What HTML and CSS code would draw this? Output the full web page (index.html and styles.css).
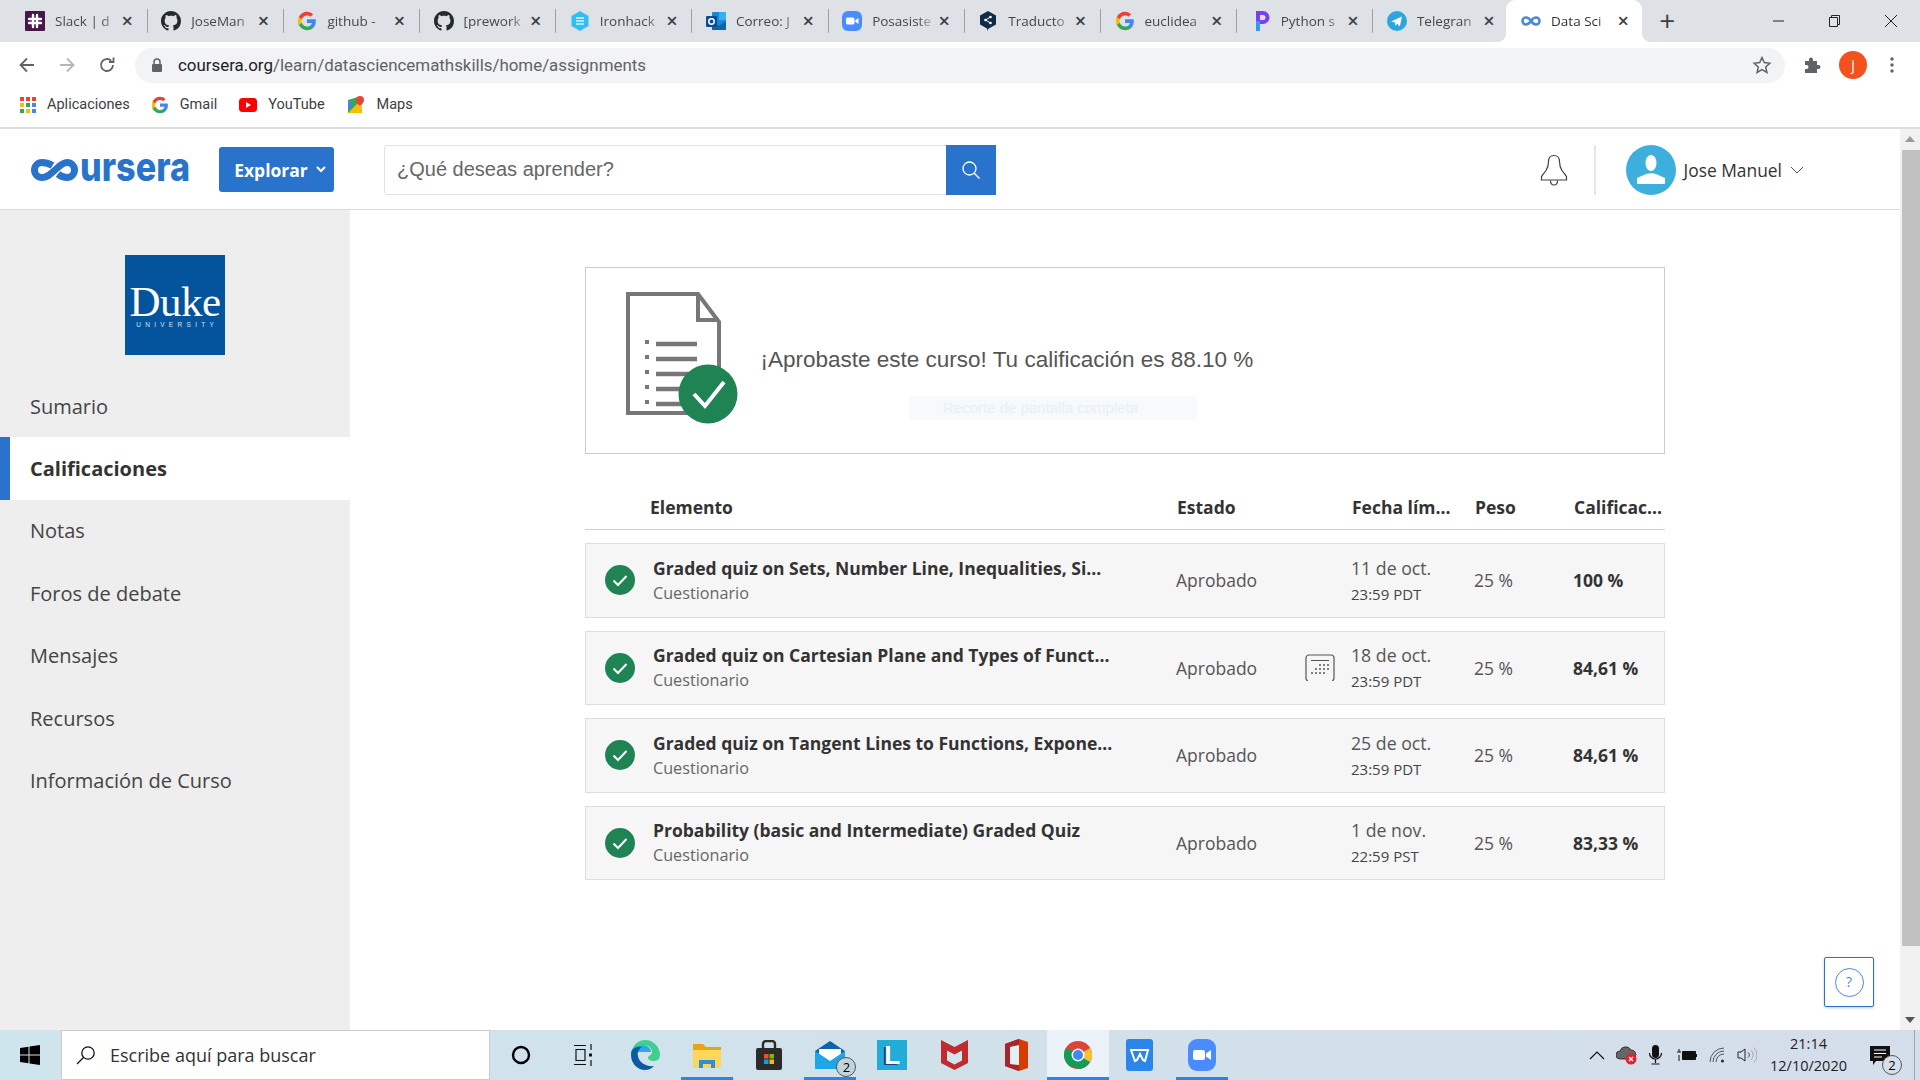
FILE: index.html
```html
<!DOCTYPE html>
<html lang="es">
<head>
<meta charset="utf-8">
<title>Data Science Math Skills - Coursera</title>
<link rel="stylesheet" href="styles.css">
</head>
<body>
<svg class="defs" aria-hidden="true">
  <symbol id="g" viewBox="0 0 24 24">
    <path fill="#4285F4" d="M22.56 12.25c0-.78-.07-1.53-.2-2.25H12v4.26h5.92c-.26 1.37-1.04 2.53-2.21 3.31v2.77h3.57c2.08-1.92 3.28-4.74 3.28-8.09z"/>
    <path fill="#34A853" d="M12 23c2.97 0 5.46-.98 7.28-2.66l-3.57-2.77c-.98.66-2.23 1.06-3.71 1.06-2.86 0-5.29-1.93-6.16-4.53H2.18v2.84C3.99 20.53 7.7 23 12 23z"/>
    <path fill="#FBBC05" d="M5.84 14.09c-.22-.66-.35-1.36-.35-2.09s.13-1.43.35-2.09V7.07H2.18C1.43 8.55 1 10.22 1 12s.43 3.45 1.18 4.93l2.85-2.22.81-.62z"/>
    <path fill="#EA4335" d="M12 5.38c1.62 0 3.06.56 4.21 1.64l3.15-3.15C17.45 2.09 14.97 1 12 1 7.7 1 3.99 3.47 2.18 7.07l3.66 2.84c.87-2.6 3.3-4.53 6.16-4.53z"/>
  </symbol>
  <symbol id="gh" viewBox="0 0 16 16">
    <path fill="#24292e" d="M8 0C3.58 0 0 3.58 0 8c0 3.54 2.29 6.53 5.47 7.59.4.07.55-.17.55-.38 0-.19-.01-.82-.01-1.49-2.01.37-2.53-.49-2.69-.94-.09-.23-.48-.94-.82-1.13-.28-.15-.68-.52-.01-.53.63-.01 1.08.58 1.23.82.72 1.21 1.87.87 2.33.66.07-.52.28-.87.51-1.07-1.78-.2-3.64-.89-3.64-3.95 0-.87.31-1.59.82-2.15-.08-.2-.36-1.02.08-2.12 0 0 .67-.21 2.2.82.64-.18 1.32-.27 2-.27.68 0 1.36.09 2 .27 1.53-1.04 2.2-.82 2.2-.82.44 1.1.16 1.92.08 2.12.51.56.82 1.27.82 2.15 0 3.07-1.87 3.75-3.65 3.95.29.25.54.73.54 1.48 0 1.07-.01 1.93-.01 2.2 0 .21.15.46.55.38A8.013 8.013 0 0016 8c0-4.42-3.58-8-8-8z"/>
  </symbol>
  <symbol id="slack" viewBox="0 0 20 20">
    <rect width="20" height="20" rx="1" fill="#4a154b"/>
    <path d="M8 4v12M12 4v12M4 8h12M4 12h12" stroke="#fff" stroke-width="2.4" stroke-linecap="round"/>
  </symbol>
  <symbol id="iron" viewBox="0 0 20 20">
    <path d="M10 0l8.5 5v10L10 20l-8.500-5V5z" fill="#35bdf0"/>
    <path d="M6 7h8M6 10h8M6 13h8" stroke="#d9f3fd" stroke-width="1.300"/>
  </symbol>
  <symbol id="outlook" viewBox="0 0 20 20">
    <rect x="6" y="1" width="14" height="16" rx="1" fill="#1a86d8"/>
    <rect x="13" y="1" width="7" height="8" fill="#38b0ee"/>
    <path d="M6 10l7 5 7-5v9H6z" fill="#0f62ac"/>
    <rect y="5" width="11" height="11" rx="1" fill="#0a4d94"/>
    <circle cx="5.500" cy="10.500" r="2.700" fill="none" stroke="#fff" stroke-width="1.500"/>
  </symbol>
  <symbol id="zoom" viewBox="0 0 20 20">
    <rect width="20" height="20" rx="6" fill="#4a8cff"/>
    <rect x="4" y="6.500" width="8.500" height="7" rx="1.500" fill="#fff"/>
    <path d="M13.300 9.300L16.500 7v6l-3.200-2.300z" fill="#fff"/>
  </symbol>
  <symbol id="deepl" viewBox="0 0 20 20">
    <path d="M10 0l8 4.500v9L10 18l-1 2v-2.500l-7-4v-9z" fill="#0f2b46"/>
    <circle cx="7.500" cy="9" r="1.300" fill="#fff"/>
    <circle cx="12.500" cy="6" r="1.300" fill="#fff"/>
    <circle cx="12.500" cy="12" r="1.300" fill="#fff"/>
    <path d="M7.500 9l5-3M7.500 9l5 3" stroke="#fff"/>
  </symbol>
  <symbol id="pcharm" viewBox="0 0 20 20">
    <path d="M5 0h7a6.500 6.500 0 010 13H9v-4h3a2.500 2.500 0 000-5H5z" fill="#7b3ff2"/>
    <rect x="5" y="4" width="4" height="16" fill="#2a9df4"/>
    <rect x="5" y="4" width="4" height="6" fill="#7b3ff2"/>
  </symbol>
  <symbol id="tg" viewBox="0 0 20 20">
    <circle cx="10" cy="10" r="10" fill="#2ca5e0"/>
    <path d="M4 10.500L15 5.500 12.800 15.500 10 12.800 8.500 15 8 11.500z" fill="#fff"/>
  </symbol>
  <symbol id="inf" viewBox="0 0 20 10">
    <path d="M10 5C8.500 2.700 7.200 1.500 5 1.500a3.500 3.500 0 000 7c2.200 0 3.500-1.200 5-3.500s2.800-3.500 5-3.500a3.500 3.500 0 010 7c-2.200 0-3.500-1.200-5-3.500z" fill="none" stroke="#4d8ad0" stroke-width="2.600"/>
  </symbol>
  <symbol id="ok" viewBox="0 0 30 30">
    <circle cx="15" cy="15" r="15" fill="#1f8354"/>
    <path d="M8.500 15.500l4.500 4.500 8.500-9" fill="none" stroke="#fff" stroke-width="2"/>
  </symbol>
</svg>

<div class="tabs">
  <div class="tab"><svg class="fav"><use href="#slack"/></svg><span class="tab-t">Slack | d</span><span class="tab-x">×</span></div>
  <div class="tab"><svg class="fav"><use href="#gh"/></svg><span class="tab-t">JoseMan</span><span class="tab-x">×</span></div>
  <div class="tab"><svg class="fav"><use href="#g"/></svg><span class="tab-t">github -</span><span class="tab-x">×</span></div>
  <div class="tab"><svg class="fav"><use href="#gh"/></svg><span class="tab-t">[prework</span><span class="tab-x">×</span></div>
  <div class="tab"><svg class="fav"><use href="#iron"/></svg><span class="tab-t">Ironhack</span><span class="tab-x">×</span></div>
  <div class="tab"><svg class="fav"><use href="#outlook"/></svg><span class="tab-t">Correo: J</span><span class="tab-x">×</span></div>
  <div class="tab"><svg class="fav"><use href="#zoom"/></svg><span class="tab-t">Posasiste</span><span class="tab-x">×</span></div>
  <div class="tab"><svg class="fav"><use href="#deepl"/></svg><span class="tab-t">Traducto</span><span class="tab-x">×</span></div>
  <div class="tab"><svg class="fav"><use href="#g"/></svg><span class="tab-t">euclidea</span><span class="tab-x">×</span></div>
  <div class="tab"><svg class="fav"><use href="#pcharm"/></svg><span class="tab-t">Python s</span><span class="tab-x">×</span></div>
  <div class="tab"><svg class="fav"><use href="#tg"/></svg><span class="tab-t">Telegran</span><span class="tab-x">×</span></div>
  <div class="tab tab-on"><svg class="fav"><use href="#inf"/></svg><span class="tab-t">Data Sci</span><span class="tab-x">×</span></div>
  <div class="newtab">+</div>
  <div class="winctl">
    <svg width="14" height="14" viewBox="0 0 14 14"><path d="M1 7h11" stroke="#222"/></svg>
    <svg width="14" height="14" viewBox="0 0 14 14"><path d="M1.500 3.500h8v9h-8zM3.500 3.500v-2h8v9h-2" fill="none" stroke="#222"/></svg>
    <svg width="14" height="14" viewBox="0 0 14 14"><path d="M1 1l12 12M13 1L1 13" stroke="#222"/></svg>
  </div>
</div>

<div class="toolbar">
  <div class="nav">
    <svg width="18" height="18" viewBox="0 0 18 18"><path d="M16 9H3M9 2.500L2.500 9 9 15.500" fill="none" stroke="#5f6368" stroke-width="1.800"/></svg>
    <svg width="18" height="18" viewBox="0 0 18 18"><path d="M2 9h13M9 2.500L15.500 9 9 15.500" fill="none" stroke="#b4b6b9" stroke-width="1.800"/></svg>
    <svg width="18" height="18" viewBox="0 0 18 18"><path d="M15 9a6 6 0 11-1.800-4.300M15.500 1.500v4.500H11" fill="none" stroke="#5f6368" stroke-width="1.800"/></svg>
  </div>
  <div class="omni">
    <svg class="lock" width="12" height="14" viewBox="0 0 12 14"><path d="M3 6V4a3 3 0 016 0v2" fill="none" stroke="#5f6368" stroke-width="1.500"/><rect x="1" y="6" width="10" height="8" rx="1" fill="#5f6368"/></svg>
    <span class="url"><span class="url-d">coursera.org</span>/learn/datasciencemathskills/home/assignments</span>
    <svg class="star" width="20" height="20" viewBox="0 0 20 20"><path d="M10 2.500l2.300 5.100 5.500.6-4.100 3.700 1.200 5.500-4.900-2.800-4.900 2.800 1.200-5.500L2.200 8.200l5.500-.6z" fill="none" stroke="#5f6368" stroke-width="1.500"/></svg>
  </div>
  <div class="tools">
    <svg width="20" height="20" viewBox="0 0 20 20"><path d="M3 6h4V4.500a2 2 0 014 0V6h4v4h1.500a2 2 0 010 4H15v4H3v-4h1.500a2 2 0 000-4H3z" fill="#5f6368"/></svg>
    <span class="me">j</span>
    <svg width="6" height="18" viewBox="0 0 6 18"><circle cx="3" cy="3" r="1.700" fill="#5f6368"/><circle cx="3" cy="9" r="1.700" fill="#5f6368"/><circle cx="3" cy="15" r="1.700" fill="#5f6368"/></svg>
  </div>
</div>

<div class="bookmarks">
  <div class="bm"><svg width="16" height="16" viewBox="0 0 16 16">
    <path d="M0 0h4v4H0z" fill="#ea4335"/><path d="M6 0h4v4H6z" fill="#ea4335"/><path d="M12 0h4v4h-4z" fill="#ea4335"/>
    <path d="M0 6h4v4H0z" fill="#fbbc05"/><path d="M6 6h4v4H6z" fill="#34a853"/><path d="M12 6h4v4h-4z" fill="#4285f4"/>
    <path d="M0 12h4v4H0z" fill="#34a853"/><path d="M6 12h4v4H6z" fill="#fbbc05"/><path d="M12 12h4v4h-4z" fill="#4285f4"/></svg>Aplicaciones</div>
  <div class="bm"><svg width="18" height="18"><use href="#g"/></svg>Gmail</div>
  <div class="bm"><svg width="18" height="14" viewBox="0 0 18 14"><rect width="18" height="14" rx="3.500" fill="#f00"/><path d="M7 4l5 3-5 3z" fill="#fff"/></svg>YouTube</div>
  <div class="bm"><svg width="18" height="18" viewBox="0 0 18 18"><path d="M1 4l10-3v16l-10 0z" fill="#34a853"/><path d="M1 17L11 7l4 4v6z" fill="#fbbc05"/><path d="M1 4l5 5-5 5z" fill="#4285f4"/><path d="M13 0a4 4 0 014 4c0 3-4 6-4 6s-4-3-4-6a4 4 0 014-4z" fill="#ea4335"/></svg>Maps</div>
</div>

<div class="page">
  <div class="viewport">
    <header class="head">
      <svg class="logo" width="168" height="22" viewBox="0 0 168 22" role="img">
        <path d="M22.500 6.500C19.500 4.700 16.500 3.500 12 3.500a7.500 7.500 0 000 15c5.500 0 8.500-3.500 13-7.500s7.500-7.500 12-7.500a7.500 7.500 0 010 15c-3 0-6-1-9-3.500" fill="none" stroke="#2a73cc" stroke-width="7"/>
        <text x="50" y="21.500" class="logo-t" textLength="110" lengthAdjust="spacingAndGlyphs">ursera</text>
      </svg>
      <button class="explore">Explorar<svg width="10" height="7" viewBox="0 0 10 7"><path d="M1 1l4 4 4-4" fill="none" stroke="#fff" stroke-width="2"/></svg></button>
      <div class="search">
        <span class="search-t">¿Qué deseas aprender?</span>
        <span class="search-b"><svg width="20" height="20" viewBox="0 0 20 20"><circle cx="8.500" cy="8.500" r="6.500" fill="none" stroke="#fff" stroke-width="1.300"/><path d="M13.200 13.200L18.500 18.500" stroke="#fff" stroke-width="1.300"/></svg></span>
      </div>
      <div class="user">
        <svg width="30" height="32" viewBox="0 0 30 32"><path d="M15 1.500c-3.500 0-5.500 2.500-5.500 6 0 3-.5 6-2.500 9-1.500 2.300-3.500 4.500-4.500 6v3.500h25V22.500c-1-1.500-3-3.700-4.500-6-2-3-2.500-6-2.500-9 0-3.500-2-6-5.500-6z" fill="#fff" stroke="#3c4043" stroke-width="1.200"/><path d="M11.500 26.500c0 6 7 6 7 0" fill="none" stroke="#3c4043" stroke-width="1.200"/></svg>
        <span class="vr"></span>
        <svg width="50" height="50" viewBox="0 0 50 50"><circle cx="25" cy="25" r="25" fill="#3cafdc"/><ellipse cx="25" cy="18" rx="5.500" ry="8" fill="#fff"/><path d="M11 39v-6l9-4c3-1 7-1 10 0l9 4v6z" fill="#fff"/></svg>
        <span class="uname">Jose Manuel</span>
        <svg width="14" height="8" viewBox="0 0 14 8"><path d="M1 1l6 6 6-6" fill="none" stroke="#555"/></svg>
      </div>
    </header>
    <div class="content">
      <nav class="side">
        <div class="duke"><span class="duke-n">Duke</span><span class="duke-u">UNIVERSITY</span></div>
        <ul class="menu">
          <li>Sumario</li>
          <li class="on">Calificaciones</li>
          <li>Notas</li>
          <li>Foros de debate</li>
          <li>Mensajes</li>
          <li>Recursos</li>
          <li>Información de Curso</li>
        </ul>
      </nav>
      <main class="main">
        <section class="banner">
          <svg width="112" height="133" viewBox="0 0 112 133">
            <path d="M2 2h70l21 28v91H2z" fill="#fff" stroke="#777" stroke-width="4"/>
            <path d="M72 2v26h21" fill="none" stroke="#777" stroke-width="4"/>
            <path d="M30 52h41M30 67h41M30 82h41M30 97h41M30 112h41" stroke="#777" stroke-width="4.500"/>
            <path d="M19 50h4M19 65h4M19 80h4M19 95h4M19 110h4" stroke="#777" stroke-width="4"/>
            <circle cx="82" cy="102" r="29.500" fill="#1f8354"/>
            <path d="M68 102l11 12 19-24" fill="none" stroke="#fff" stroke-width="4"/>
          </svg>
          <p class="pass">¡Aprobaste este curso! Tu calificación es 88.10 %</p>
          <div class="ghost">Recorte de pantalla completa</div>
        </section>
        <div class="thead">
          <span>Elemento</span><span>Estado</span><span>Fecha lím...</span><span>Peso</span><span>Calificac...</span>
        </div>
        <div class="rows">
          <div class="row">
            <svg class="ok"><use href="#ok"/></svg>
            <div><div class="ti">Graded quiz on Sets, Number Line, Inequalities, Si...</div><div class="su">Cuestionario</div></div>
            <span class="st">Aprobado</span><span></span>
            <div><div class="da">11 de oct.</div><div class="tm">23:59 PDT</div></div>
            <span class="st">25 %</span><b class="gr">100 %</b>
          </div>
          <div class="row">
            <svg class="ok"><use href="#ok"/></svg>
            <div><div class="ti">Graded quiz on Cartesian Plane and Types of Funct...</div><div class="su">Cuestionario</div></div>
            <span class="st">Aprobado</span>
            <svg class="cal" width="30" height="28" viewBox="0 0 30 28"><path d="M1 24V4a3 3 0 013-3h22a3 3 0 013 3v20M1 24c0 1.500 1 2.500 2 2.500M29 24c0 1.500-1 2.500-2 2.500M6 6.500h18" fill="none" stroke="#555" stroke-width="1.200"/><path d="M14 11h2M18 11h2M22 11h2M10 15h2M14 15h2M18 15h2M22 15h2M6 19h2M10 19h2M14 19h2M18 19h2" stroke="#555" stroke-width="1.600"/></svg>
            <div><div class="da">18 de oct.</div><div class="tm">23:59 PDT</div></div>
            <span class="st">25 %</span><b class="gr">84,61 %</b>
          </div>
          <div class="row">
            <svg class="ok"><use href="#ok"/></svg>
            <div><div class="ti">Graded quiz on Tangent Lines to Functions, Expone...</div><div class="su">Cuestionario</div></div>
            <span class="st">Aprobado</span><span></span>
            <div><div class="da">25 de oct.</div><div class="tm">23:59 PDT</div></div>
            <span class="st">25 %</span><b class="gr">84,61 %</b>
          </div>
          <div class="row">
            <svg class="ok"><use href="#ok"/></svg>
            <div><div class="ti">Probability (basic and Intermediate) Graded Quiz</div><div class="su">Cuestionario</div></div>
            <span class="st">Aprobado</span><span></span>
            <div><div class="da">1 de nov.</div><div class="tm">22:59 PST</div></div>
            <span class="st">25 %</span><b class="gr">83,33 %</b>
          </div>
        </div>
      </main>
    </div>
    <div class="help"><span class="help-c">?</span></div>
  </div>
  <div class="scroll">
    <span class="arr-up"></span>
    <span class="thumb"></span>
    <span class="arr-dn"></span>
  </div>
</div>

<footer class="taskbar">
  <div class="start"><svg width="20" height="20" viewBox="0 0 20 20"><path d="M0 3l8.500-1.200v7.700H0zM9.500 1.600L20 0v9.500H9.500zM0 10.500h8.500v7.700L0 17zM9.500 10.500H20V20L9.500 18.400z" fill="#000"/></svg></div>
  <div class="tsearch">
    <svg width="20" height="20" viewBox="0 0 20 20"><circle cx="12" cy="8" r="6.200" fill="none" stroke="#111" stroke-width="1.300"/><path d="M7.500 12.500L1 19" stroke="#111" stroke-width="1.300"/></svg>
    <span>Escribe aquí para buscar</span>
  </div>
  <div class="slots">
    <div class="slot"><svg width="20" height="20" viewBox="0 0 20 20"><circle cx="10" cy="10" r="8" fill="none" stroke="#000" stroke-width="2.400"/></svg></div>
    <div class="slot"><svg width="20" height="24" viewBox="0 0 20 24"><path d="M1 2.500h12M1 21.500h12M3 6.500h9v11H3zM18 1v6M18 17v6" fill="none" stroke="#111" stroke-width="1.200"/><rect x="16" y="10.500" width="3" height="3" fill="#111"/></svg></div>
    <div class="slot"><svg width="30" height="30" viewBox="0 0 30 30"><path d="M15 0a15 15 0 0115 15c0 2-1 6-6 6-3 0-6-1-6-3 0-3 4-2 4-6 0-4-4-7-8-7-6 0-11 4-13 8C3 5 8 0 15 0z" fill="#3fcf8e"/><path d="M1 13c0-4 6-8 12-8 4 0 8 3 8 7H7c-3 0-6 3-6 1z" fill="#29abe2"/><path d="M1 15C1 8 7 6 12 7c-3 2-5 5-4 9 1 7 9 11 16 10-3 3-6 4-9 4C7 30 1 23 1 15z" fill="#0c59a4"/></svg></div>
    <div class="slot run"><svg width="28" height="26" viewBox="0 0 28 26"><path d="M0 2h10l3 3h15v21H0z" fill="#e8a317"/><path d="M0 8h28v18H0z" fill="#fbd75b"/><path d="M6 18h16v8h-4v-4h-8v4H6z" fill="#2f8fd6"/></svg></div>
    <div class="slot"><svg width="26" height="30" viewBox="0 0 26 30"><rect x="0" y="8" width="26" height="22" rx="2" fill="#2b2b2b"/><path d="M7 9V4a3 3 0 013-3h6a3 3 0 013 3v5" fill="none" stroke="#2b2b2b" stroke-width="2.400"/><rect x="8" y="14" width="4.500" height="4.500" fill="#f25022"/><rect x="13.500" y="14" width="4.500" height="4.500" fill="#7fba00"/><rect x="8" y="19.500" width="4.500" height="4.500" fill="#00a4ef"/><rect x="13.500" y="19.500" width="4.500" height="4.500" fill="#ffb900"/></svg></div>
    <div class="slot run"><svg width="30" height="28" viewBox="0 0 30 28"><path d="M0 10L15 0l15 10v18H0z" fill="#0f62ac"/><path d="M4 8h22v12L15 24 4 20z" fill="#fff"/><path d="M0 10l15 10 15-10v18H0z" fill="#1fa6e8"/></svg><span class="badge">2</span></div>
    <div class="slot"><div class="lapp"><span>L</span></div></div>
    <div class="slot"><svg width="27" height="30" viewBox="0 0 27 30"><path d="M0 0l13.500 7L27 0v23L13.500 30 0 23z" fill="#c02b30"/><path d="M6 10.500l7.500 4 7.500-4v10l-7.500 4-7.500-4z" fill="#d2e4ee"/></svg></div>
    <div class="slot"><svg width="24" height="34" viewBox="0 0 24 34"><path d="M15 1L1 6v22l14 5 9-3V4z" fill="#d83b01"/><path d="M15 1L1 6v22l14 5V27L6 26V9l9-2z" fill="#a5262d"/><path d="M6 9l9-2v20l-9-1z" fill="#e8eff4"/></svg></div>
    <div class="slot act run"><svg width="28" height="28" viewBox="0 0 28 28"><circle cx="14" cy="14" r="14" fill="#db4437"/><path d="M14 14L26.100 7a14 14 0 010 14L14 28z" fill="#fbc02d"/><path d="M14 14l-6 10.500 6 3.500A14 14 0 0026 21zM14 14L2 7A14 14 0 008 26.600z" fill="#0f9d58"/><circle cx="14" cy="14" r="6.500" fill="#fff"/><circle cx="14" cy="14" r="5" fill="#4285f4"/></svg></div>
    <div class="slot"><svg width="27" height="32" viewBox="0 0 27 32"><rect width="27" height="32" rx="3" fill="#2b85ea"/><path d="M5 11h17l-3 11-2-1-3-6-3 6-2 1z" fill="none" stroke="#fff" stroke-width="2"/></svg></div>
    <div class="slot run"><svg width="28" height="32" viewBox="0 0 28 32"><rect width="28" height="32" rx="9" fill="#4a8cff"/><rect x="5" y="11" width="12" height="10" rx="2" fill="#fff"/><path d="M18 14.500l5-3.500v10l-5-3.500z" fill="#fff"/></svg></div>
  </div>
  <div class="tray">
    <div class="ti-s"><svg width="16" height="9" viewBox="0 0 16 9"><path d="M1 8l7-7 7 7" fill="none" stroke="#111" stroke-width="1.200"/></svg></div>
    <div class="ti-s"><svg width="22" height="20" viewBox="0 0 22 20"><path d="M4 14a4 4 0 010-8 6 6 0 0111-1 4.500 4.500 0 014 7v2z" fill="#666" stroke="#222" stroke-width=".8"/><circle cx="15" cy="14" r="5.500" fill="#e5202e"/><path d="M13 12l4 4M17 12l-4 4" stroke="#fff" stroke-width="1.300"/></svg></div>
    <div class="ti-s ti-mic"><svg width="14" height="20" viewBox="0 0 14 20"><rect x="4" width="7" height="13" rx="3.500" fill="#111"/><path d="M1.500 8a6 6 0 0012 0M7.500 14v4M3.500 19h8" fill="none" stroke="#111" stroke-width="1.200"/></svg></div>
    <div class="ti-s"><svg width="20" height="12" viewBox="0 0 20 12"><path d="M0 3h4M2 0v3M2 6v6" stroke="#111"/><path d="M5.500 2.500h13v8h-13z" fill="#111" stroke="#111"/><rect x="19" y="5" width="1" height="3" fill="#111"/></svg></div>
    <div class="ti-s"><svg width="16" height="16" viewBox="0 0 16 16"><path d="M1 15A14 14 0 0115 1M4 15A11 11 0 0115 4M7 15A8 8 0 0115 7" fill="none" stroke="#555" stroke-width="1"/><circle cx="13.500" cy="14" r="1.600" fill="#333"/></svg></div>
    <div class="ti-s"><svg width="20" height="18" viewBox="0 0 20 18"><path d="M1 6h3l4-3v12l-4-3H1z" fill="none" stroke="#222"/><path d="M11 6.500a3 3 0 010 5" fill="none" stroke="#444"/><path d="M14 4a7 7 0 010 10M17 1.500a11 11 0 010 15" fill="none" stroke="#aaa"/></svg></div>
    <div class="clock"><span>21:14</span><span>12/10/2020</span></div>
    <div class="notif"><svg width="20" height="19" viewBox="0 0 20 19"><path d="M0 0h20v15H6l-3 4v-4H0z" fill="#111"/><path d="M4 4h12M4 7.500h12M4 11h8" stroke="#fff"/></svg><span class="nbadge">2</span></div>
    <span class="showdesk"></span>
  </div>
</footer>
</body>
</html>
```

FILE: styles.css
```css
* { box-sizing: border-box; }
html, body { height: 100%; }
body {
  margin: 0;
  height: 1080px;
  overflow: hidden;
  display: flex;
  flex-direction: column;
  font-family: "Open Sans", "Liberation Sans", sans-serif;
  color: #333;
  background: #fff;
}
.defs { position: absolute; width: 0; height: 0; }

/* browser tabs */
.tabs {
  height: 42px;
  flex: none;
  background: #dee1e6;
  display: flex;
  align-items: stretch;
  padding: 0 0 0 10px;
}
.tab {
  width: 136.2px;
  flex: none;
  display: flex;
  align-items: center;
  padding: 0 12px 0 15px;
  position: relative;
  font-size: 13.5px;
  color: #45474a;
}
.tab::after {
  content: "";
  position: absolute;
  right: -1.5px;
  top: 9px;
  bottom: 9px;
  width: 1px;
  background: #9a9da1;
}
.tab:nth-child(11)::after { display: none; }
.tab-on {
  background: #fff;
  border-radius: 9px 9px 0 0;
  color: #333;
  margin-left: -2px;
}
.tab-on::before, .tab-on::after {
  content: "";
  position: absolute;
  top: auto;
  bottom: 0;
  width: 8px;
  height: 8px;
  background: radial-gradient(circle at 0 0, #dee1e6 7.5px, #fff 8px);
}
.tab-on::before { left: -8px; }
.tab-on::after {
  right: -8px;
  background: radial-gradient(circle at 100% 0, #dee1e6 7.5px, #fff 8px);
}
.fav { width: 20px; height: 20px; flex: none; }
.tab-t {
  flex: 1;
  min-width: 0;
  margin-left: 10px;
  white-space: nowrap;
  -webkit-mask-image: linear-gradient(to right, #000 70%, transparent 100%);
  mask-image: linear-gradient(to right, #000 70%, transparent 100%);
}
.tab-x { width: 14px; text-align: center; font-size: 20px; line-height: 20px; font-weight: 600; color: #3c4043; flex: none; }
.newtab { width: 50px; text-align: center; font-size: 28px; line-height: 40px; color: #3c4043; flex: none; }
.winctl {
  margin-left: auto;
  display: flex;
  align-items: center;
  gap: 42px;
  padding: 0 22px 0 0;
}

/* browser toolbar */
.toolbar {
  height: 44px;
  flex: none;
  display: flex;
  align-items: center;
  padding: 2px 0 0 18px;
}
.nav { display: flex; gap: 22px; width: 117px; flex: none; }
.omni {
  width: 1650px;
  height: 35px;
  background: #f1f3f4;
  border-radius: 18px;
  display: flex;
  align-items: center;
  padding: 0 13px 0 16px;
  flex: none;
}
.url { margin-left: 15px; font-size: 16.9px; color: #5f6368; white-space: nowrap; font-family: Roboto, sans-serif; }
.url-d { color: #202124; }
.star { margin-left: auto; }
.tools { display: flex; align-items: center; padding-left: 17px; gap: 17px; }
.tools svg:last-child { margin-left: 5px; }
.me {
  width: 28px; height: 28px; border-radius: 50%;
  background: #f4511e; color: #fff;
  font-size: 14px; line-height: 28px; text-align: center;
}

/* bookmarks */
.bookmarks {
  height: 43px;
  flex: none;
  display: flex;
  align-items: center;
  padding: 0 0 4px 20px;
  gap: 21px;
  border-bottom: 2px solid #dcdcdc;
  font-size: 14.500px;
  color: #3c4043;
  font-family: Roboto, sans-serif;
}
.bm { display: flex; align-items: center; gap: 11px; }
.bm:nth-child(3) { margin-left: 1px; }
.bm:nth-child(4) { margin-left: 1px; gap: 12px; }

/* page */
.page { flex: 1; min-height: 0; display: flex; }
.viewport { flex: 1; min-width: 0; display: flex; flex-direction: column; position: relative; }
.head {
  height: 81px;
  flex: none;
  display: flex;
  align-items: center;
  padding: 1px 0 0 30px;
  border-bottom: 1px solid #dcdcdc;
}
.logo { flex: none; }
.logo-t { font-family: Inter, sans-serif; font-weight: 800; font-size: 40px; fill: #2a73cc; }
.explore {
  margin-left: 21px;
  width: 115px;
  height: 45px;
  background: #2a73cc;
  color: #fff;
  border: 0;
  border-radius: 3px;
  font: 700 17.500px "Open Sans", sans-serif;
  display: flex;
  align-items: center;
  justify-content: center;
  gap: 8px;
  padding: 0 0 0 7px;
}
.search {
  margin-left: 50px;
  width: 612px;
  height: 50px;
  border: 1.500px solid #e4e4e4;
  border-radius: 3px;
  display: flex;
  align-items: center;
}
.search-t { flex: 1; padding-left: 12px; font: 20px "Liberation Sans", sans-serif; color: #666; }
.search-b { width: 50px; height: 50px; margin: -1px; background: #2a73cc; display: flex; align-items: center; justify-content: center; }
.user { margin-left: auto; display: flex; align-items: center; padding-right: 96px; }
.vr { width: 2px; height: 50px; background: #e6e6e6; margin: 0 30px 0 25px; }
.uname { margin: 0 8px; font-size: 17.400px; color: #333; white-space: nowrap; }

.content { flex: 1; min-height: 0; display: flex; }
.side { width: 350px; flex: none; background: #eee; padding-top: 45px; }
.duke {
  width: 100px;
  height: 100px;
  margin: 0 auto 0 125px;
  background: #03549c;
  color: #fff;
  display: flex;
  flex-direction: column;
  align-items: center;
  padding-top: 28px;
  font-family: "Liberation Serif", serif;
}
.duke-n { font-size: 43px; line-height: 38px; letter-spacing: -.5px; }
.duke-u { font-size: 6.500px; line-height: 8px; letter-spacing: 4.300px; margin: 0 -4.300px 0 0; color: #d9e4f0; font-family: "Liberation Sans", sans-serif; }
.menu { list-style: none; margin: 20px 0 0; padding: 0; }
.menu li {
  height: 62.4px;
  display: flex;
  align-items: center;
  padding-left: 30px;
  font-size: 20px;
  color: #444;
}
.menu .on {
  background: #fff;
  font-weight: 700;
  color: #333;
  border-left: 10px solid #2a73cc;
  padding-left: 20px;
}
.main { flex: 1; min-width: 0; padding: 57px 0 0 235px; }
.banner {
  width: 1080px;
  height: 187px;
  border: 1px solid #ccc;
  display: flex;
  align-items: center;
  padding: 0 0 5px 40px;
  gap: 22.500px;
  position: relative;
}
.pass { margin: 4px 0 0; font: 22.500px "Liberation Sans", sans-serif; color: #555; }
.ghost {
  position: absolute;
  left: 324px;
  top: 128px;
  width: 287px;
  height: 24px;
  padding-left: 33px;
  background: #f6fafd;
  color: #e9eff5;
  font: 15px/24px "Liberation Sans", sans-serif;
}
.thead {
  width: 1080px;
  margin-top: 35px;
  border-bottom: 1.500px solid #d0d0d0;
  display: grid;
  grid-template-columns: 527px 175px 123px 99px 1fr;
  padding: 0 0 4px 65px;
  height: 41px;
  align-items: center;
  font-size: 17.500px;
  font-weight: 700;
  color: #333;
  white-space: nowrap;
}
.rows { width: 1080px; margin-top: 13px; display: flex; flex-direction: column; gap: 13px; }
.row {
  height: 74.500px;
  background: #f6f6f6;
  border: 1px solid #ddd;
  display: grid;
  grid-template-columns: 67px 523px 129px 46px 123px 99px 1fr;
  align-items: center;
}
.ok { width: 30px; height: 30px; margin-left: 19px; }
.ti { font-size: 17.500px; font-weight: 700; line-height: 24px; color: #333; white-space: nowrap; }
.su { font-size: 16.200px; line-height: 24px; color: #666; margin-top: 1px; }
.st { font-size: 17.500px; color: #555; }
.cal { display: block; }
.da { font-size: 17.700px; line-height: 26px; color: #555; }
.tm { font-size: 15px; line-height: 24px; color: #444; margin-top: 1px; }
.gr { font-size: 17.500px; color: #333; }
.help {
  position: absolute;
  right: 26px;
  top: 828px;
  width: 50px;
  height: 50px;
  background: #fff;
  border: 1.500px solid #2a73cc;
  border-radius: 2px;
  display: flex;
  align-items: center;
  justify-content: center;
  box-shadow: 0 1px 3px rgba(0,0,0,.2);
}
.help-c {
  width: 29px; height: 29px;
  border: 1.500px solid #4a8ad8;
  border-radius: 50%;
  color: #4a8ad8;
  font-size: 14px;
  line-height: 26px;
  text-align: center;
}
.scroll {
  width: 20px;
  flex: none;
  background: #f1f1f1;
  display: flex;
  flex-direction: column;
  align-items: center;
}
.thumb { width: 18px; flex: 1; background: #c1c1c1; margin: 0 0 0 1px; }
.arr-up, .arr-dn { flex: none; width: 0; height: 0; border-left: 5px solid transparent; border-right: 5px solid transparent; }
.arr-up { border-bottom: 6px solid #999; margin: 7px 0 8px; }
.arr-dn { border-top: 6px solid #555; margin: 71px 0 7px; }

/* taskbar */
.taskbar {
  height: 50px;
  flex: none;
  background: linear-gradient(to right, #cfe5ee, #d1e1ea 50%, #d5deeb);
  display: flex;
  align-items: stretch;
}
.start { width: 61px; flex: none; display: flex; align-items: center; justify-content: center; padding-right: 1px; }
.tsearch {
  width: 429px;
  flex: none;
  background: #fff;
  border: 1px solid #ccc;
  display: flex;
  align-items: center;
  gap: 14px;
  padding-left: 14px;
  font-size: 18px;
  color: #333;
  white-space: nowrap;
}
.slots { display: flex; flex: none; }
.slot {
  width: 61.900px;
  flex: none;
  display: flex;
  align-items: center;
  justify-content: center;
  position: relative;
}
.act { background: #ecf3f8; }
.run::after {
  content: "";
  position: absolute;
  left: 5px;
  right: 5px;
  bottom: 0;
  height: 3px;
  background: #2089f0;
}
.act::after { left: 0; right: 0; }
.badge {
  position: absolute;
  left: 37px;
  top: 27px;
  width: 20px;
  height: 20px;
  border-radius: 50%;
  background: #c3d3dc;
  border: 1px solid #555;
  color: #000;
  font-size: 13px;
  line-height: 18px;
  text-align: center;
}
.lapp { width: 30px; height: 30px; background: #22add8; color: #fff; font: 700 26px/30px "Liberation Sans", sans-serif; text-align: center; text-shadow: -2px 1px 0 #1b3f8f; }
.tray { margin-left: auto; display: flex; align-items: center; padding-right: 5px; }
.ti-s { width: 30px; flex: none; display: flex; justify-content: center; }
.ti-mic { padding-right: 4px; }
.clock {
  width: 93px;
  flex: none;
  display: flex;
  flex-direction: column;
  align-items: center;
  font-size: 14.500px;
  line-height: 22px;
  color: #222;
  white-space: nowrap;
}
.notif { width: 50px; flex: none; position: relative; display: flex; justify-content: center; }
.nbadge {
  position: absolute;
  left: 27px;
  top: 9px;
  width: 20px;
  height: 20px;
  border-radius: 50%;
  background: #d5deeb;
  border: 1px solid #555;
  font-size: 13px;
  line-height: 18px;
  text-align: center;
  color: #000;
}
.showdesk { width: 1px; height: 50px; background: #9aa; margin-left: 9px; }
```
